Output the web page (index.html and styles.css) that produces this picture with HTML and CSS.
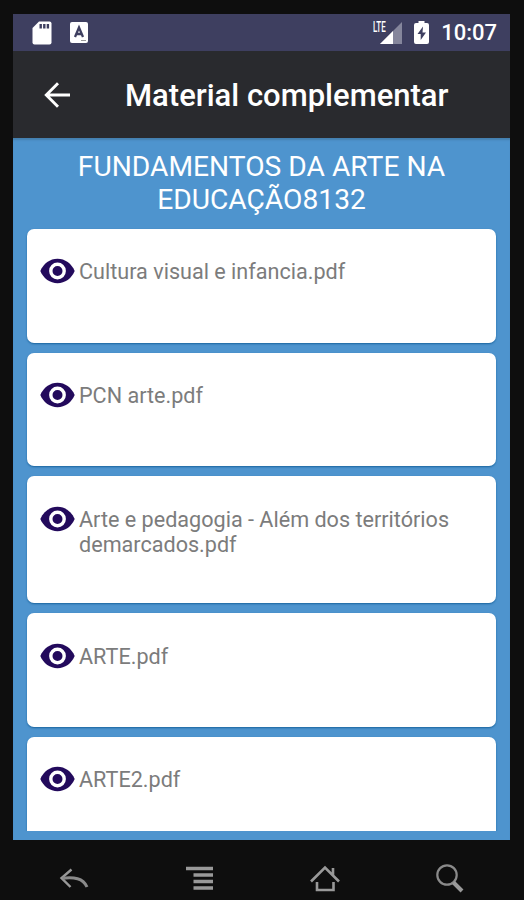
FILE: index.html
```html
<!DOCTYPE html>
<html lang="pt-BR">
<head>
    <meta charset="UTF-8">
    <meta name="viewport" content="width=device-width, initial-scale=1.0">
    <title>Material complementar</title>
    <link rel="stylesheet" href="styles.css">
</head>
<body>
    <!-- Símbolo usado em todos os cartões -->
    <svg class="symbols" width="0" height="0">
        <symbol id="eye" viewBox="0 0 35 26">
            <path fill="#230a5c" d="M0.3 13C3.5 5.5 10 .8 17.5 .8S31.500 5.500 34.700 13C31.500 20.500 25 25.200 17.500 25.200S3.500 20.500 .3 13z"/>
            <circle cx="17.500" cy="13" r="6.700" fill="#230a5c" stroke="#fff" stroke-width="3.400"/>
        </symbol>
    </svg>

    <div class="phone">
        <div class="screen">
            <!-- Barra de status -->
            <div class="status-bar">
                <svg class="sd-icon" width="20" height="24" viewBox="0 0 20 24">
                    <path fill="#fff" d="M7 .5h10.500a2 2 0 0 1 2 2v19a2 2 0 0 1-2 2h-15a2 2 0 0 1-2-2V7z"/>
                    <path stroke="#3e3f60" stroke-width="2.400" d="M8.700 3v4.500M12.300 3v4.500M15.900 3v4.500"/>
                </svg>
                <svg class="app-icon" width="18" height="21" viewBox="0 0 18 21">
                    <rect width="18" height="21" rx="2" fill="#fff"/>
                    <path fill="none" stroke="#3e3f60" stroke-width="2.300" d="M5 15L9 5.500 13 15M6.500 12h5"/>
                    <path stroke="#999" d="M11 18.500h5"/>
                </svg>
                <span class="network">LTE</span>
                <svg class="signal-icon" width="22" height="22" viewBox="0 0 22 22">
                    <path fill="#85869c" d="M22 0v22H0z"/>
                    <path fill="#fff" d="M13 9v13H0z"/>
                </svg>
                <svg class="battery-icon" width="15" height="23" viewBox="0 0 15 23">
                    <path fill="#fff" d="M4.500 0h6v2H13a2 2 0 0 1 2 2v17a2 2 0 0 1-2 2H2a2 2 0 0 1-2-2V4a2 2 0 0 1 2-2h2.500z"/>
                    <path fill="#3e3f60" d="M9 5.500L3.500 13h3.200v6L12 11.500H8.500z"/>
                </svg>
                <span class="clock">10:07</span>
            </div>

            <!-- Cabeçalho -->
            <div class="toolbar">
                <svg class="back-arrow" width="26" height="26" viewBox="0 0 26 26">
                    <path fill="none" stroke="#fff" stroke-width="2.900" d="M26 13H2.500M14 1.300L2.300 13 14 24.700"/>
                </svg>
                <h1>Material complementar</h1>
            </div>

            <div class="content">
                <h2>FUNDAMENTOS DA ARTE NA<br>EDUCAÇÃO8132</h2>
                <div class="file-list">
                    <div class="card">
                        <svg class="eye"><use href="#eye"/></svg>
                        <p>Cultura visual e infancia.pdf</p>
                    </div>
                    <div class="card">
                        <svg class="eye"><use href="#eye"/></svg>
                        <p>PCN arte.pdf</p>
                    </div>
                    <div class="card tall">
                        <svg class="eye"><use href="#eye"/></svg>
                        <p>Arte e pedagogia - Além dos territórios demarcados.pdf</p>
                    </div>
                    <div class="card">
                        <svg class="eye"><use href="#eye"/></svg>
                        <p>ARTE.pdf</p>
                    </div>
                    <div class="card">
                        <svg class="eye"><use href="#eye"/></svg>
                        <p>ARTE2.pdf</p>
                    </div>
                </div>
            </div>
        </div>

        <!-- Botões do aparelho -->
        <div class="buttons">
            <svg width="30" height="30" viewBox="0 0 30 30">
                <path fill="none" stroke="#999" stroke-width="2.400" d="M12.500 5.500L2.500 14l9 9"/>
                <path fill="none" stroke="#8a8a8a" stroke-width="3" d="M3.500 14.200C15 13 24 14 28 23"/>
            </svg>
            <svg width="30" height="30" viewBox="0 0 30 30">
                <path fill="none" stroke="#999" stroke-width="3.400" d="M2 4.500h27M9.500 11h19.500M9.500 17.500h19.500M9.500 24h19.500"/>
            </svg>
            <svg width="30" height="30" viewBox="0 0 30 30">
                <path fill="none" stroke="#999" stroke-width="2.600" d="M1 17.500L15 3.500l14 14M23 11V4M7 18v8h16.500v-8"/>
            </svg>
            <svg width="30" height="30" viewBox="0 0 30 30">
                <circle cx="12" cy="11" r="9.700" fill="none" stroke="#8a8a8a" stroke-width="2.200"/>
                <path stroke="#999" stroke-width="4" d="M18.500 18.500L27 27"/>
            </svg>
        </div>
    </div>
</body>
</html>
```
FILE: styles.css
```css
* {
    box-sizing: border-box;
}
body {
    margin: 0;
    background-color: #0e0e0e;
    font-family: Roboto, sans-serif;
}
h1, h2, p {
    margin: 0;
    font-weight: 400;
}
.symbols {
    display: block;
}
.phone {
    height: 900px;
    padding: 14px 14px 0 13px;
    overflow: hidden;
}
.screen {
    height: 826px;
    display: flex;
    flex-direction: column;
}
.status-bar {
    height: 37px;
    flex: none;
    display: flex;
    align-items: center;
    padding: 0 13px 0 19px;
    background-color: #3e3f60;
    color: #fff;
}
.app-icon {
    margin-left: 18px;
}
.network {
    width: 14px;
    margin-left: auto;
    margin-bottom: 12px;
    font-size: 14px;
    font-weight: 500;
    line-height: 14px;
    transform: scaleX(.57);
    transform-origin: left;
}
.signal-icon {
    margin-left: -7px;
}
.battery-icon {
    margin-left: 12px;
}
.clock {
    margin-left: 12px;
    font-size: 22px;
    font-weight: 500;
    line-height: 39px;
}
.toolbar {
    height: 87px;
    flex: none;
    display: flex;
    align-items: center;
    padding-left: 31px;
    background-color: #292a2e;
    color: #fff;
}
.toolbar h1 {
    margin: 2px 0 0 55px;
    font-size: 31px;
    font-weight: 500;
    white-space: nowrap;
}
.content {
    flex: 1;
    min-height: 0;
    display: flex;
    flex-direction: column;
    padding: 12px 14px 9px;
    background-color: #4e94ce;
    box-shadow: inset 0 3px 2px -1px #447fae;
}
.content h2 {
    color: #fff;
    font-size: 28.2px;
    line-height: 33px;
    text-align: center;
    white-space: nowrap;
}
.file-list {
    flex: 1;
    min-height: 0;
    margin: 0 -3px;
    padding: 13px 3px 0;
    display: flex;
    flex-direction: column;
    gap: 10px;
    overflow: hidden;
}
.card {
    height: 113.6px;
    flex: none;
    display: flex;
    padding: 29.4px 30px 0 12.5px;
    background-color: #fff;
    border-radius: 7px;
    box-shadow: 0 1px 2px #1a659f;
}
.card.tall {
    height: 127px;
}
.eye {
    width: 35px;
    height: 26px;
    flex: none;
}
.card p {
    margin: 1px 0 0 4.5px;
    color: #7c7c7c;
    font-size: 21.6px;
    line-height: 25px;
}
.buttons {
    display: flex;
    justify-content: space-between;
    padding: 24px 45px 0 46px;
}
```
